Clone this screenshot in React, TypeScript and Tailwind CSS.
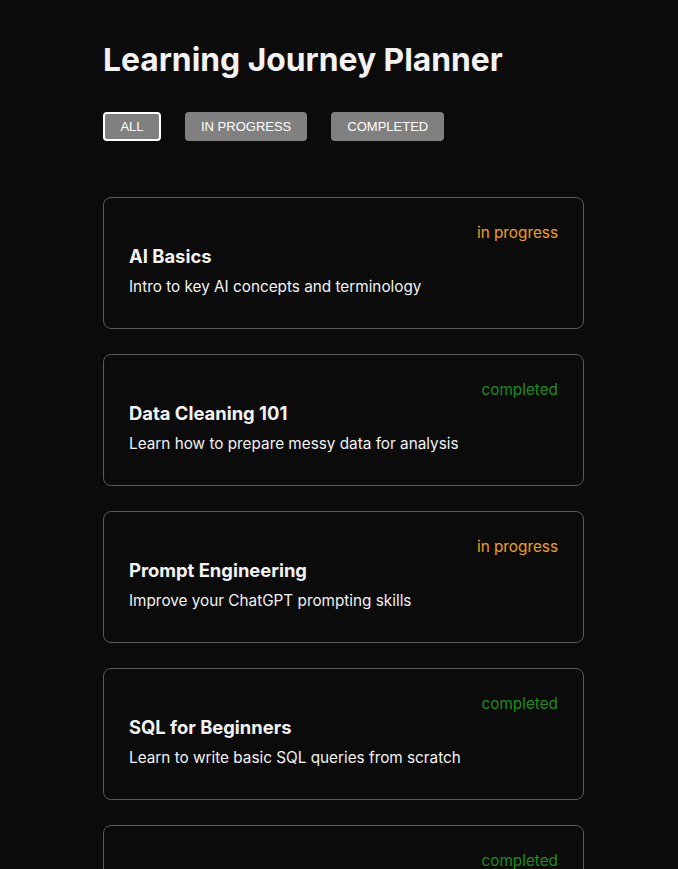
const courses = [
  { title: "AI Basics", desc: "Intro to key AI concepts and terminology", status: "in progress" },
  { title: "Data Cleaning 101", desc: "Learn how to prepare messy data for analysis", status: "completed" },
  { title: "Prompt Engineering", desc: "Improve your ChatGPT prompting skills", status: "in progress" },
  { title: "SQL for Beginners", desc: "Learn to write basic SQL queries from scratch", status: "completed" },
  { title: "", desc: "", status: "completed" },
];

const filters = ["ALL", "IN PROGRESS", "COMPLETED"];

export default function App() {
  return (
    <div className="min-h-screen bg-[#0b0b0b] text-[#f2f2f2] font-['Inter',sans-serif]">
      <div className="w-[481px] ml-[103px] pt-[40px] pb-10">
        <h1 className="text-[31.8px] leading-[40px] font-bold">Learning Journey Planner</h1>
        <div className="flex gap-6 mt-[32px]">
          {filters.map((f, i) => (
            <button
              key={f}
              className={`h-[29px] min-w-[58px] px-[14px] rounded-[4px] border-2 bg-[#808080] text-white text-[13px] font-['Liberation_Sans',Arial,sans-serif] ${
                i === 0 ? "border-white" : "border-[#808080]"
              }`}
            >
              {f}
            </button>
          ))}
        </div>
        <div className="flex flex-col gap-[25px] mt-[56px]">
          {courses.map((c, i) => (
            <div key={i} className="h-[132px] rounded-lg border border-[#5a5a5a] px-[25px] pt-[25px]">
              <div
                className={`text-right text-[15.3px] leading-[20px] ${
                  c.status === "completed" ? "text-[#1f8a1f]" : "text-[#f0a020]"
                }`}
              >
                {c.status}
              </div>
              {c.title && <div className="text-[18.4px] leading-[26px] font-bold">{c.title}</div>}
              {c.desc && <div className="text-[15.3px] leading-[24px] mt-[6px]">{c.desc}</div>}
            </div>
          ))}
        </div>
      </div>
    </div>
  );
}
